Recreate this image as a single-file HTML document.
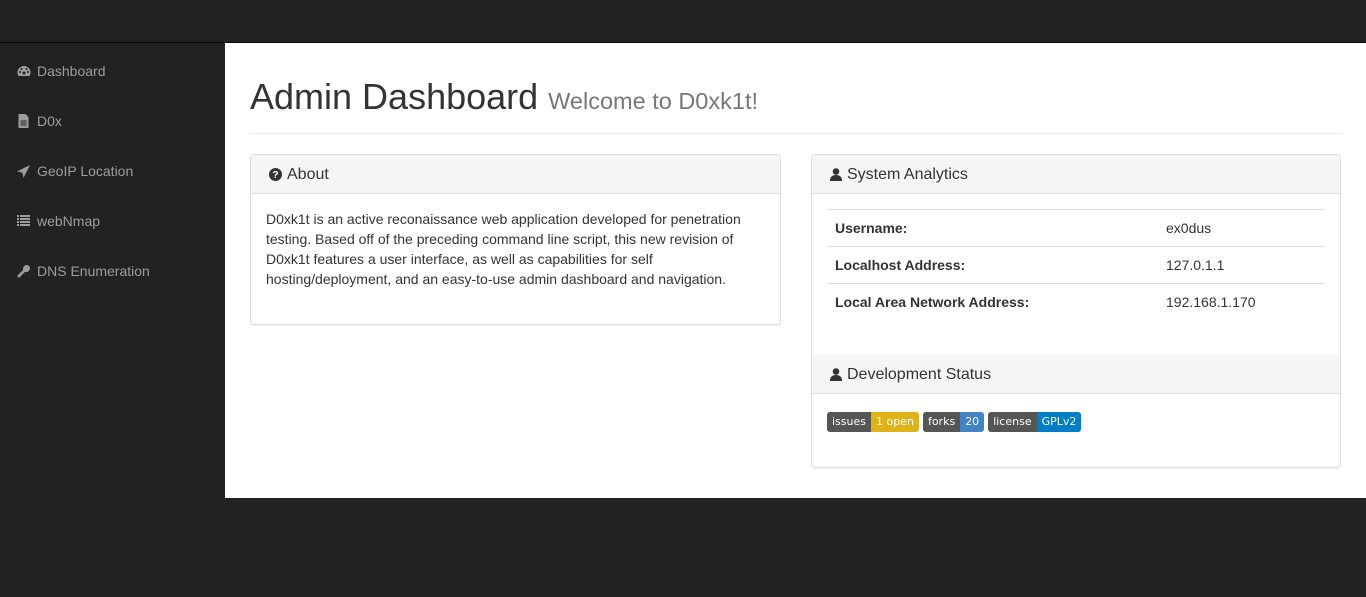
<!DOCTYPE html>
<html><head><style>
*{box-sizing:border-box;margin:0;padding:0}
body{width:1366px;height:597px;background:#222;font-family:"Liberation Sans",sans-serif;font-size:14px;color:#333;position:relative;overflow:hidden}
.top{position:absolute;left:0;top:0;width:1366px;height:43px;background:#222;border-bottom:1px solid #080808}
.side{position:absolute;left:0;top:46px;width:225px}
.side div{height:50px;padding-left:17px;color:#9d9d9d;font-size:14px;display:flex;align-items:center}
.side svg{margin-right:7px;fill:#9d9d9d}
.main{position:absolute;left:225px;top:43px;width:1141px;height:455px;background:#fff}
h1{position:absolute;left:25px;top:33px;font-size:36px;font-weight:500;color:#333}
h1 small{font-size:23.5px;color:#777;font-weight:400}
.hr{position:absolute;left:25px;top:90px;width:1091px;border-top:1px solid #eee}
.panel{position:absolute;border:1px solid #ddd;border-radius:4px;background:#fff;box-shadow:0 1px 1px rgba(0,0,0,.05)}
.ph{height:39px;background:#f5f5f5;border-bottom:1px solid #ddd;padding:0 18px;font-size:16px;line-height:39px;display:flex;align-items:center}
.ph svg{margin-right:5px}
table{border-collapse:collapse;width:498px;margin:15px 0 0 15px}
td{border-top:1px solid #ddd;height:37px;padding:0 8px;font-size:14px}
td b{font-weight:bold}
.badge{display:inline-flex;height:20px;font-family:"DejaVu Sans",sans-serif;font-size:11px;color:#fff;border-radius:3px;overflow:hidden;margin-right:4px;line-height:20px}
.badge span{padding:0 5px}
.l{background:#555}
</style></head><body>
<div class="top"></div>
<div class="side">
<div><svg width="14" height="12" viewBox="0 0 14 12" style="margin-right:6px"><path d="M7 1A6.5 6.5 0 0 0 .5 7.5c0 1.3.4 2.5 1 3.5h11c.6-1 1-2.2 1-3.5A6.5 6.5 0 0 0 7 1z"/><circle cx="7" cy="8" r="1.5" fill="#222"/><circle cx="3" cy="7" r="1" fill="#222"/><circle cx="11" cy="7" r="1" fill="#222"/><circle cx="4.5" cy="4" r="1" fill="#222"/><circle cx="9.5" cy="4" r="1" fill="#222"/></svg>Dashboard</div>
<div><svg width="13" height="14" viewBox="0 0 12 14"><path d="M1 0h7l3 3v11H1z"/><path d="M3 7h6M3 9h6M3 11h6" stroke="#222"/></svg>D0x</div>
<div><svg width="13" height="13" viewBox="0 0 12 12"><path d="M12 0L0 6l5 1 1 5z"/></svg>GeoIP Location</div>
<div><svg width="13" height="12" viewBox="0 0 13 12"><path d="M0 0h2v2H0zM3 0h10v2H3zM0 3h2v2H0zM3 3h10v2H3zM0 6h2v2H0zM3 6h10v2H3zM0 9h2v2H0zM3 9h10v2H3z"/></svg>webNmap</div>
<div><svg width="13" height="13" viewBox="0 0 13 13"><path d="M1 11l6-6a3 3 0 0 1 4-4l-2 2 1 1 2-2a3 3 0 0 1-4 4l-6 6z" stroke="#9d9d9d" stroke-width="1.3"/></svg>DNS Enumeration</div>
</div>
<div class="main">
<h1>Admin Dashboard <small>Welcome to D0xk1t!</small></h1>
<div class="hr"></div>
<div class="panel" style="left:25px;top:111px;width:531px;height:171px">
<div class="ph"><svg width="13" height="13" viewBox="0 0 14 14"><circle cx="7" cy="7" r="7" fill="#333"/><text x="7" y="11" font-size="11" font-weight="bold" text-anchor="middle" fill="#fff" font-family="Liberation Sans">?</text></svg>About</div>
<div style="padding:15px 15px;line-height:20px">D0xk1t is an active reconaissance web application developed for penetration testing. Based off of the preceding command line script, this new revision of D0xk1t features a user interface, as well as capabilities for self hosting/deployment, and an easy-to-use admin dashboard and navigation.</div>
</div>
<div class="panel" style="left:586px;top:111px;width:530px;height:314px">
<div class="ph"><svg width="12" height="13" viewBox="0 0 12 13"><circle cx="6" cy="3.5" r="3.3" fill="#333"/><path d="M0 13c0-4 2-6 6-6s6 2 6 6z" fill="#333"/></svg>System Analytics</div>
<table>
<tr><td style="width:331px"><b>Username:</b></td><td>ex0dus</td></tr>
<tr><td><b>Localhost Address:</b></td><td>127.0.1.1</td></tr>
<tr><td><b>Local Area Network Address:</b></td><td>192.168.1.170</td></tr>
</table>
<div class="ph" style="position:absolute;top:200px;left:0;right:0;border-top:0"><svg width="12" height="13" viewBox="0 0 12 13"><circle cx="6" cy="3.5" r="3.3" fill="#333"/><path d="M0 13c0-4 2-6 6-6s6 2 6 6z" fill="#333"/></svg>Development Status</div>
<div style="position:absolute;top:257px;left:15px;display:flex">
<div class="badge"><span class="l">issues</span><span style="background:#dfb317">1 open</span></div>
<div class="badge"><span class="l">forks</span><span style="background:#4183c4">20</span></div>
<div class="badge"><span class="l">license</span><span style="background:#007ec6">GPLv2</span></div>
</div>
</div>
</div>
</body></html>
